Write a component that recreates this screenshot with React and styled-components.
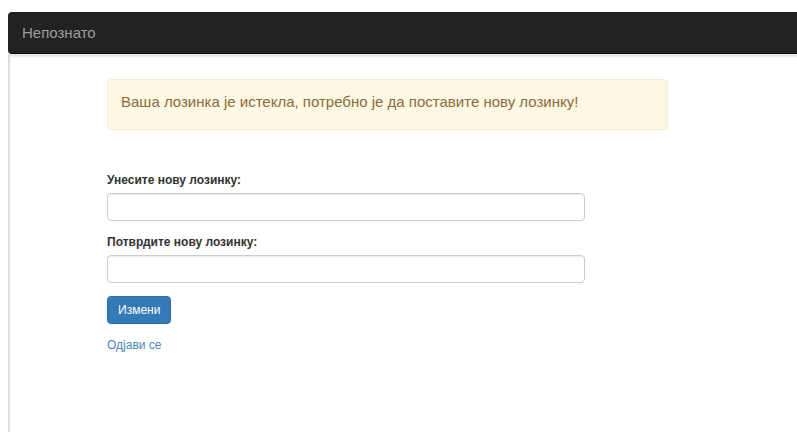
import React from "react";
import styled, { createGlobalStyle } from "styled-components";

const GlobalStyle = createGlobalStyle`
  html, body {
    margin: 0;
    padding: 0;
    background: #fff;
    font-family: "Liberation Sans", Arial, sans-serif;
    font-size: 12px;
    color: #333;
  }
`;

const Page = styled.div`
  padding: 12px 0 0 8px;
  height: 420px;
  display: flex;
  flex-direction: column;
  overflow: hidden;
`;

const Navbar = styled.div`
  height: 41px;
  background: #222;
  border-bottom: 1px solid #080808;
  border-radius: 4px 0 0 4px;
  display: flex;
  align-items: center;
  padding-left: 14px;
`;

const Brand = styled.span`
  color: #9d9d9d;
  font-size: 15px;
`;

const Body = styled.div`
  flex: 1;
  border-left: 2px solid #ddd;
  box-shadow: inset 0 4px 2px -1px #e8e8e8;
  padding: 25px 0 0 97px;
`;

const Alert = styled.div`
  width: 532px;
  padding: 13px 14px 19px 13px;
  line-height: 17px;
  background: #fcf8e3;
  border: 1px solid #faebcc;
  border-radius: 4px;
  color: #8a6d3b;
  font-size: 15px;
`;

const Form = styled.form`
  margin-top: 43px;
  display: flex;
  flex-direction: column;
  align-items: flex-start;
`;

const Label = styled.label`
  font-weight: bold;
  font-size: 12px;
  line-height: 14px;
  color: #333;
  margin-bottom: 6px;
`;

const Input = styled.input`
  box-sizing: border-box;
  width: 478px;
  height: 28px;
  border: 1px solid #ccc;
  border-radius: 4px;
  box-shadow: inset 0 1px 1px rgba(0, 0, 0, 0.075);
  margin: 0 0 ${(p) => p.$gap}px;
  padding: 4px 10px;
  font-size: 12px;
`;

const Button = styled.button`
  background: #337ab7;
  border: 1px solid #2e6da4;
  border-radius: 4px;
  color: #fff;
  font-family: inherit;
  font-size: 12px;
  height: 28px;
  padding: 0 10px;
`;

const Link = styled.a`
  margin-top: 14px;
  color: #4a86c0;
  font-size: 12px;
  text-decoration: none;
`;

export default function App() {
  return (
    <>
      <GlobalStyle />
      <Page>
        <Navbar>
          <Brand>Непознато</Brand>
        </Navbar>
        <Body>
          <Alert>Ваша лозинка је истекла, потребно је да поставите нову лозинку!</Alert>
          <Form onSubmit={(e) => e.preventDefault()}>
            <Label>Унесите нову лозинку:</Label>
            <Input type="password" $gap={14} />
            <Label>Потврдите нову лозинку:</Label>
            <Input type="password" $gap={13} />
            <Button type="submit">Измени</Button>
            <Link href="#">Одјави се</Link>
          </Form>
        </Body>
      </Page>
    </>
  );
}
